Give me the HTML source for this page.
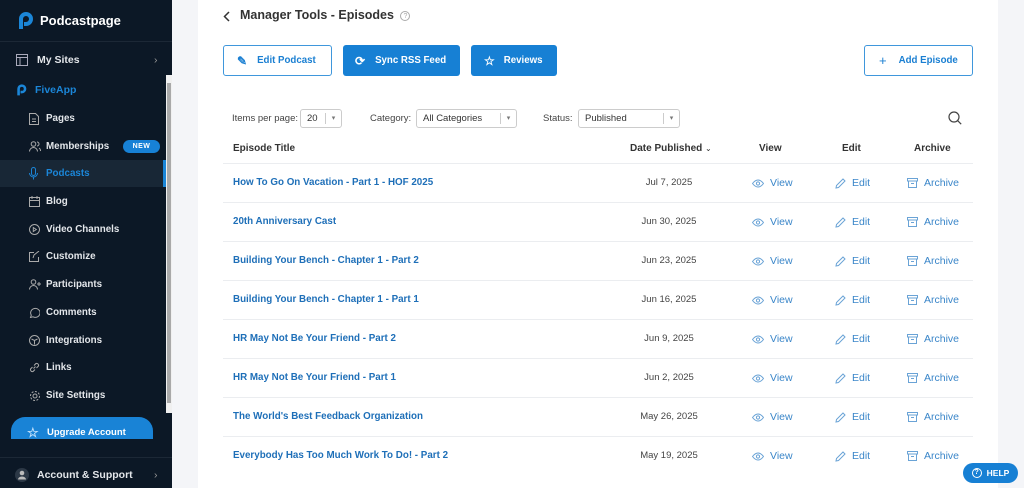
<!DOCTYPE html>
<html><head><meta charset="utf-8"><style>
*{box-sizing:border-box;margin:0;padding:0}
body{width:1024px;height:488px;overflow:hidden;background:#f4f5f8;font-family:"Liberation Sans",sans-serif;position:relative}
.sb{position:absolute;left:0;top:0;width:172px;height:488px;background:#0c1826;color:#e6e9ee}
.logo{position:absolute;left:17px;top:10px;display:flex;align-items:center;font-weight:bold;font-size:13px;color:#fff}
.sep{position:absolute;left:0;width:172px;height:1px;background:#1c2836}
.it{position:absolute;left:0;width:166px;height:27px;display:flex;align-items:center;font-size:9.8px;font-weight:bold;color:#e3e6ea}
.it svg{position:absolute;left:29px}
.it span{position:absolute;left:46px}
.act{background:#182736;color:#1b86d8;border-right:3px solid #1b86d8}
.new{position:absolute;left:123px;background:#1781d6;color:#fff;font-size:7px;border-radius:8px;width:37px;height:13px;display:flex;align-items:center;justify-content:center;letter-spacing:.5px}
.scroll{position:absolute;left:166px;top:75px;width:6px;height:338px;background:#f0f0f0}
.scroll i{position:absolute;left:1px;top:8px;width:4px;height:320px;background:#a9a9a9}
.upg{position:absolute;left:11px;top:417px;width:142px;height:22px;background:#1983d6;border-radius:14px 14px 0 0;color:#fff;font-size:9.5px;font-weight:bold;padding:10px 0 0 36px;overflow:hidden}
.card{position:absolute;left:198px;top:0;width:800px;height:488px;background:#fff}
.btn{position:absolute;top:45px;height:31px;border-radius:3px;display:flex;align-items:center;font-size:9.7px;font-weight:bold}
.pri{background:#1780d4;color:#fff}
.out{border:1.5px solid #3f97dc;color:#1a7fd2;background:#fff}
.lbl{position:absolute;top:113px;font-size:9.5px;color:#444}
.sel{position:absolute;top:109px;height:19px;border:1px solid #ccc;border-radius:3px;font-size:9.5px;color:#333;padding:3px 6px}
.sel b{position:absolute;right:0;top:3px;width:16px;height:11px;border-left:1px solid #ccc;font-size:7px;color:#777;text-align:center;font-weight:normal;line-height:11px}
.th{position:absolute;top:143px;font-size:10px;font-weight:bold;color:#333}
.row{position:absolute;left:223px;width:750px;height:39px;border-top:1px solid #ebedf0}
.t{position:absolute;left:10px;top:13px;font-size:9.8px;font-weight:bold;color:#1e6fb8}
.d{position:absolute;top:13px;width:120px;left:386px;text-align:center;font-size:9.5px;color:#444}
.a{position:absolute;top:13px;font-size:10.5px;color:#3a86c9;display:flex;align-items:center;gap:6px}
</style></head><body>
<div class="sb">
 <div class="logo"><svg width="17" height="20" viewBox="0 0 17 20"><path d="M2 19V9a7 7 0 1 1 7 7H7v-4h2a3 3 0 1 0-3-3v10z" fill="#1b86d8"/></svg><span style="margin-left:6px">Podcastpage</span></div>
 <div class="sep" style="top:41px"></div>
 <div class="it" style="top:46px;font-size:10.5px"><svg style="left:16px" width="12" height="12" viewBox="0 0 12 12" fill="none" stroke="#aab" stroke-width="1"><rect x=".5" y=".5" width="11" height="11"/><path d="M.5 3.5h11M4 3.5v8"/></svg><span style="left:37px">My Sites</span><span style="left:154px;color:#999;font-weight:normal">›</span></div>
 <div class="it" style="top:76px;color:#1b86d8;font-size:10.5px"><svg style="left:16px" width="11" height="13" viewBox="0 0 17 20"><path d="M2 19V9a7 7 0 1 1 7 7H7v-4h2a3 3 0 1 0-3-3v10z" fill="#1b86d8"/></svg><span style="left:35px">FiveApp</span></div>
 <div class="it" style="top:105px"><svg width="10" height="12" viewBox="0 0 10 12" fill="none" stroke="#aaa"><path d="M.5.5h6l3 3v8h-9z M3 6h4M3 8.5h4"/></svg><span>Pages</span></div>
 <div class="it" style="top:133px"><svg width="12" height="11" viewBox="0 0 12 11" fill="none" stroke="#aaa"><circle cx="4.5" cy="3" r="2.3"/><path d="M.5 10.5a4 4 0 0 1 8 0M8 1a2 2 0 0 1 0 4M10 7a3 3 0 0 1 1.5 3"/></svg><span>Memberships</span><div class="new">NEW</div></div>
 <div class="it act" style="top:160px"><svg width="9" height="13" viewBox="0 0 9 13" fill="none" stroke="#1b86d8"><rect x="2.5" y=".5" width="4" height="8" rx="2"/><path d="M.5 6a4 4 0 0 0 8 0M4.5 10v2.5"/></svg><span>Podcasts</span></div>
 <div class="it" style="top:188px"><svg width="11" height="11" viewBox="0 0 11 11" fill="none" stroke="#aaa"><rect x=".5" y="1.5" width="10" height="9"/><path d="M3 0v3M8 0v3M.5 4.5h10"/></svg><span>Blog</span></div>
 <div class="it" style="top:216px"><svg width="11" height="11" viewBox="0 0 11 11" fill="none" stroke="#aaa"><circle cx="5.5" cy="5.5" r="5"/><path d="M4.3 3.5v4l3-2z"/></svg><span>Video Channels</span></div>
 <div class="it" style="top:243px"><svg width="11" height="11" viewBox="0 0 11 11" fill="none" stroke="#aaa"><path d="M5 1.5H.5v9h9V6M4 7l1-3 5-4"/></svg><span>Customize</span></div>
 <div class="it" style="top:271px"><svg width="12" height="11" viewBox="0 0 12 11" fill="none" stroke="#aaa"><circle cx="4.5" cy="3" r="2.3"/><path d="M.5 10.5a4 4 0 0 1 8 0M10 3v4M8 5h4"/></svg><span>Participants</span></div>
 <div class="it" style="top:299px"><svg width="11" height="11" viewBox="0 0 11 11" fill="none" stroke="#aaa"><path d="M1.5 10.5l.8-2.3A4.7 4.5 0 1 1 4 9.8z"/></svg><span>Comments</span></div>
 <div class="it" style="top:327px"><svg width="11" height="11" viewBox="0 0 11 11" fill="none" stroke="#aaa"><circle cx="5.5" cy="5.5" r="5"/><path d="M2.5 4l3 1.5 3-1.5M5.5 5.5v4"/></svg><span>Integrations</span></div>
 <div class="it" style="top:354px"><svg width="11" height="11" viewBox="0 0 11 11" fill="none" stroke="#aaa"><path d="M4.5 6.5l2-2M3.5 5l-2 2a2 2 0 0 0 2.5 2.5l2-2M7.5 6l2-2A2 2 0 0 0 7 1.5L5 3.5"/></svg><span>Links</span></div>
 <div class="it" style="top:382px"><svg width="12" height="12" viewBox="0 0 12 12" fill="none" stroke="#aaa"><circle cx="6" cy="6" r="2"/><circle cx="6" cy="6" r="4.5" stroke-dasharray="2 1.5"/></svg><span>Site Settings</span></div>
 <div class="upg"><span style="position:absolute;left:16px;top:8px;font-size:13px;color:#bfe0fb">☆</span>Upgrade Account</div>
 <div class="scroll"><i></i></div>
 <div class="sep" style="top:457px"></div>
 <div class="it" style="top:461px;font-size:10.5px"><svg style="left:15px" width="14" height="14" viewBox="0 0 14 14"><circle cx="7" cy="7" r="7" fill="#2c3846"/><circle cx="7" cy="5" r="2.3" fill="#bbb"/><path d="M3 11.5a4 3 0 0 1 8 0z" fill="#bbb"/></svg><span style="left:37px">Account &amp; Support</span><span style="left:154px;color:#999;font-weight:normal">›</span></div>
</div>

<div class="card">
 <svg style="position:absolute;left:25px;top:11px" width="7" height="11" viewBox="0 0 7 11" fill="none" stroke="#333" stroke-width="1.5"><path d="M6 1L1.5 5.5 6 10"/></svg>
 <div style="position:absolute;left:42px;top:8px;font-size:12.5px;font-weight:bold;color:#333">Manager Tools - Episodes <span style="display:inline-block;width:10px;height:10px;border:1px solid #aaa;border-radius:50%;font-size:7px;color:#aaa;text-align:center;line-height:9px;margin-left:3px;vertical-align:1px;font-weight:normal">?</span></div>
 <div class="btn out" style="left:25px;width:109px"><span style="margin-left:13px;font-size:12px">✎</span><span style="margin-left:10px">Edit Podcast</span></div>
 <div class="btn pri" style="left:145px;width:117px"><span style="margin-left:12px;font-size:12px">⟳</span><span style="margin-left:10px">Sync RSS Feed</span></div>
 <div class="btn pri" style="left:273px;width:86px"><span style="margin-left:13px;font-size:12px">☆</span><span style="margin-left:9px">Reviews</span></div>
 <div class="btn out" style="left:666px;width:109px"><span style="margin-left:14px;font-size:13px;font-weight:normal">+</span><span style="margin-left:12px">Add Episode</span></div>
 <div class="lbl" style="left:34px">Items per page:</div>
 <div class="sel" style="left:102px;width:42px">20<b>▾</b></div>
 <div class="lbl" style="left:172px">Category:</div>
 <div class="sel" style="left:218px;width:101px">All Categories<b>▾</b></div>
 <div class="lbl" style="left:345px">Status:</div>
 <div class="sel" style="left:380px;width:102px">Published<b>▾</b></div>
 <svg style="position:absolute;left:750px;top:111px" width="14" height="14" viewBox="0 0 14 14" fill="none" stroke="#444" stroke-width="1.2"><circle cx="6" cy="6" r="5"/><path d="M9.7 9.7l3.5 3.5"/></svg>
 <div class="th" style="left:35px">Episode Title</div>
 <div class="th" style="left:432px">Date Published <span style="font-weight:normal;font-size:8px">⌄</span></div>
 <div class="th" style="left:561px">View</div>
 <div class="th" style="left:644px">Edit</div>
 <div class="th" style="left:716px">Archive</div>
</div>
<div id="rows"></div>
<div style="position:absolute;left:963px;top:463px;width:55px;height:20px;border-radius:10px;background:#1780d4;color:#fff;font-size:8.5px;font-weight:bold;display:flex;align-items:center;justify-content:center;gap:5px"><span style="width:10px;height:10px;border:1.2px solid #fff;border-radius:50%;font-size:7px;line-height:8px;text-align:center">?</span>HELP</div>
<script>
var R=[["How To Go On Vacation - Part 1 - HOF 2025","Jul 7, 2025"],["20th Anniversary Cast","Jun 30, 2025"],["Building Your Bench - Chapter 1 - Part 2","Jun 23, 2025"],["Building Your Bench - Chapter 1 - Part 1","Jun 16, 2025"],["HR May Not Be Your Friend - Part 2","Jun 9, 2025"],["HR May Not Be Your Friend - Part 1","Jun 2, 2025"],["The World's Best Feedback Organization","May 26, 2025"],["Everybody Has Too Much Work To Do! - Part 2","May 19, 2025"]];
var eye='<svg width="12" height="9" viewBox="0 0 12 9" fill="none" stroke="#6aa3d6"><path d="M.5 4.5Q6-2.5 11.5 4.5Q6 11.5.5 4.5z"/><circle cx="6" cy="4.5" r="1.6"/></svg>';
var pen='<svg width="11" height="11" viewBox="0 0 11 11" fill="none" stroke="#6aa3d6"><path d="M1 10l.5-2.5L8 1l2 2-6.5 6.5z"/></svg>';
var box='<svg width="11" height="10" viewBox="0 0 11 10" fill="none" stroke="#6aa3d6"><rect x=".5" y=".5" width="10" height="2.5"/><path d="M1.5 3v6.5h8V3M4 5.5h3"/></svg>';
var h='';R.forEach(function(r,i){h+='<div class="row" style="top:'+(163+i*39)+'px"><div class="t">'+r[0]+'</div><div class="d">'+r[1]+'</div><div class="a" style="left:529px">'+eye+'View</div><div class="a" style="left:612px">'+pen+'Edit</div><div class="a" style="left:684px">'+box+'Archive</div></div>'});
document.getElementById('rows').innerHTML=h;
</script>
</body></html>
